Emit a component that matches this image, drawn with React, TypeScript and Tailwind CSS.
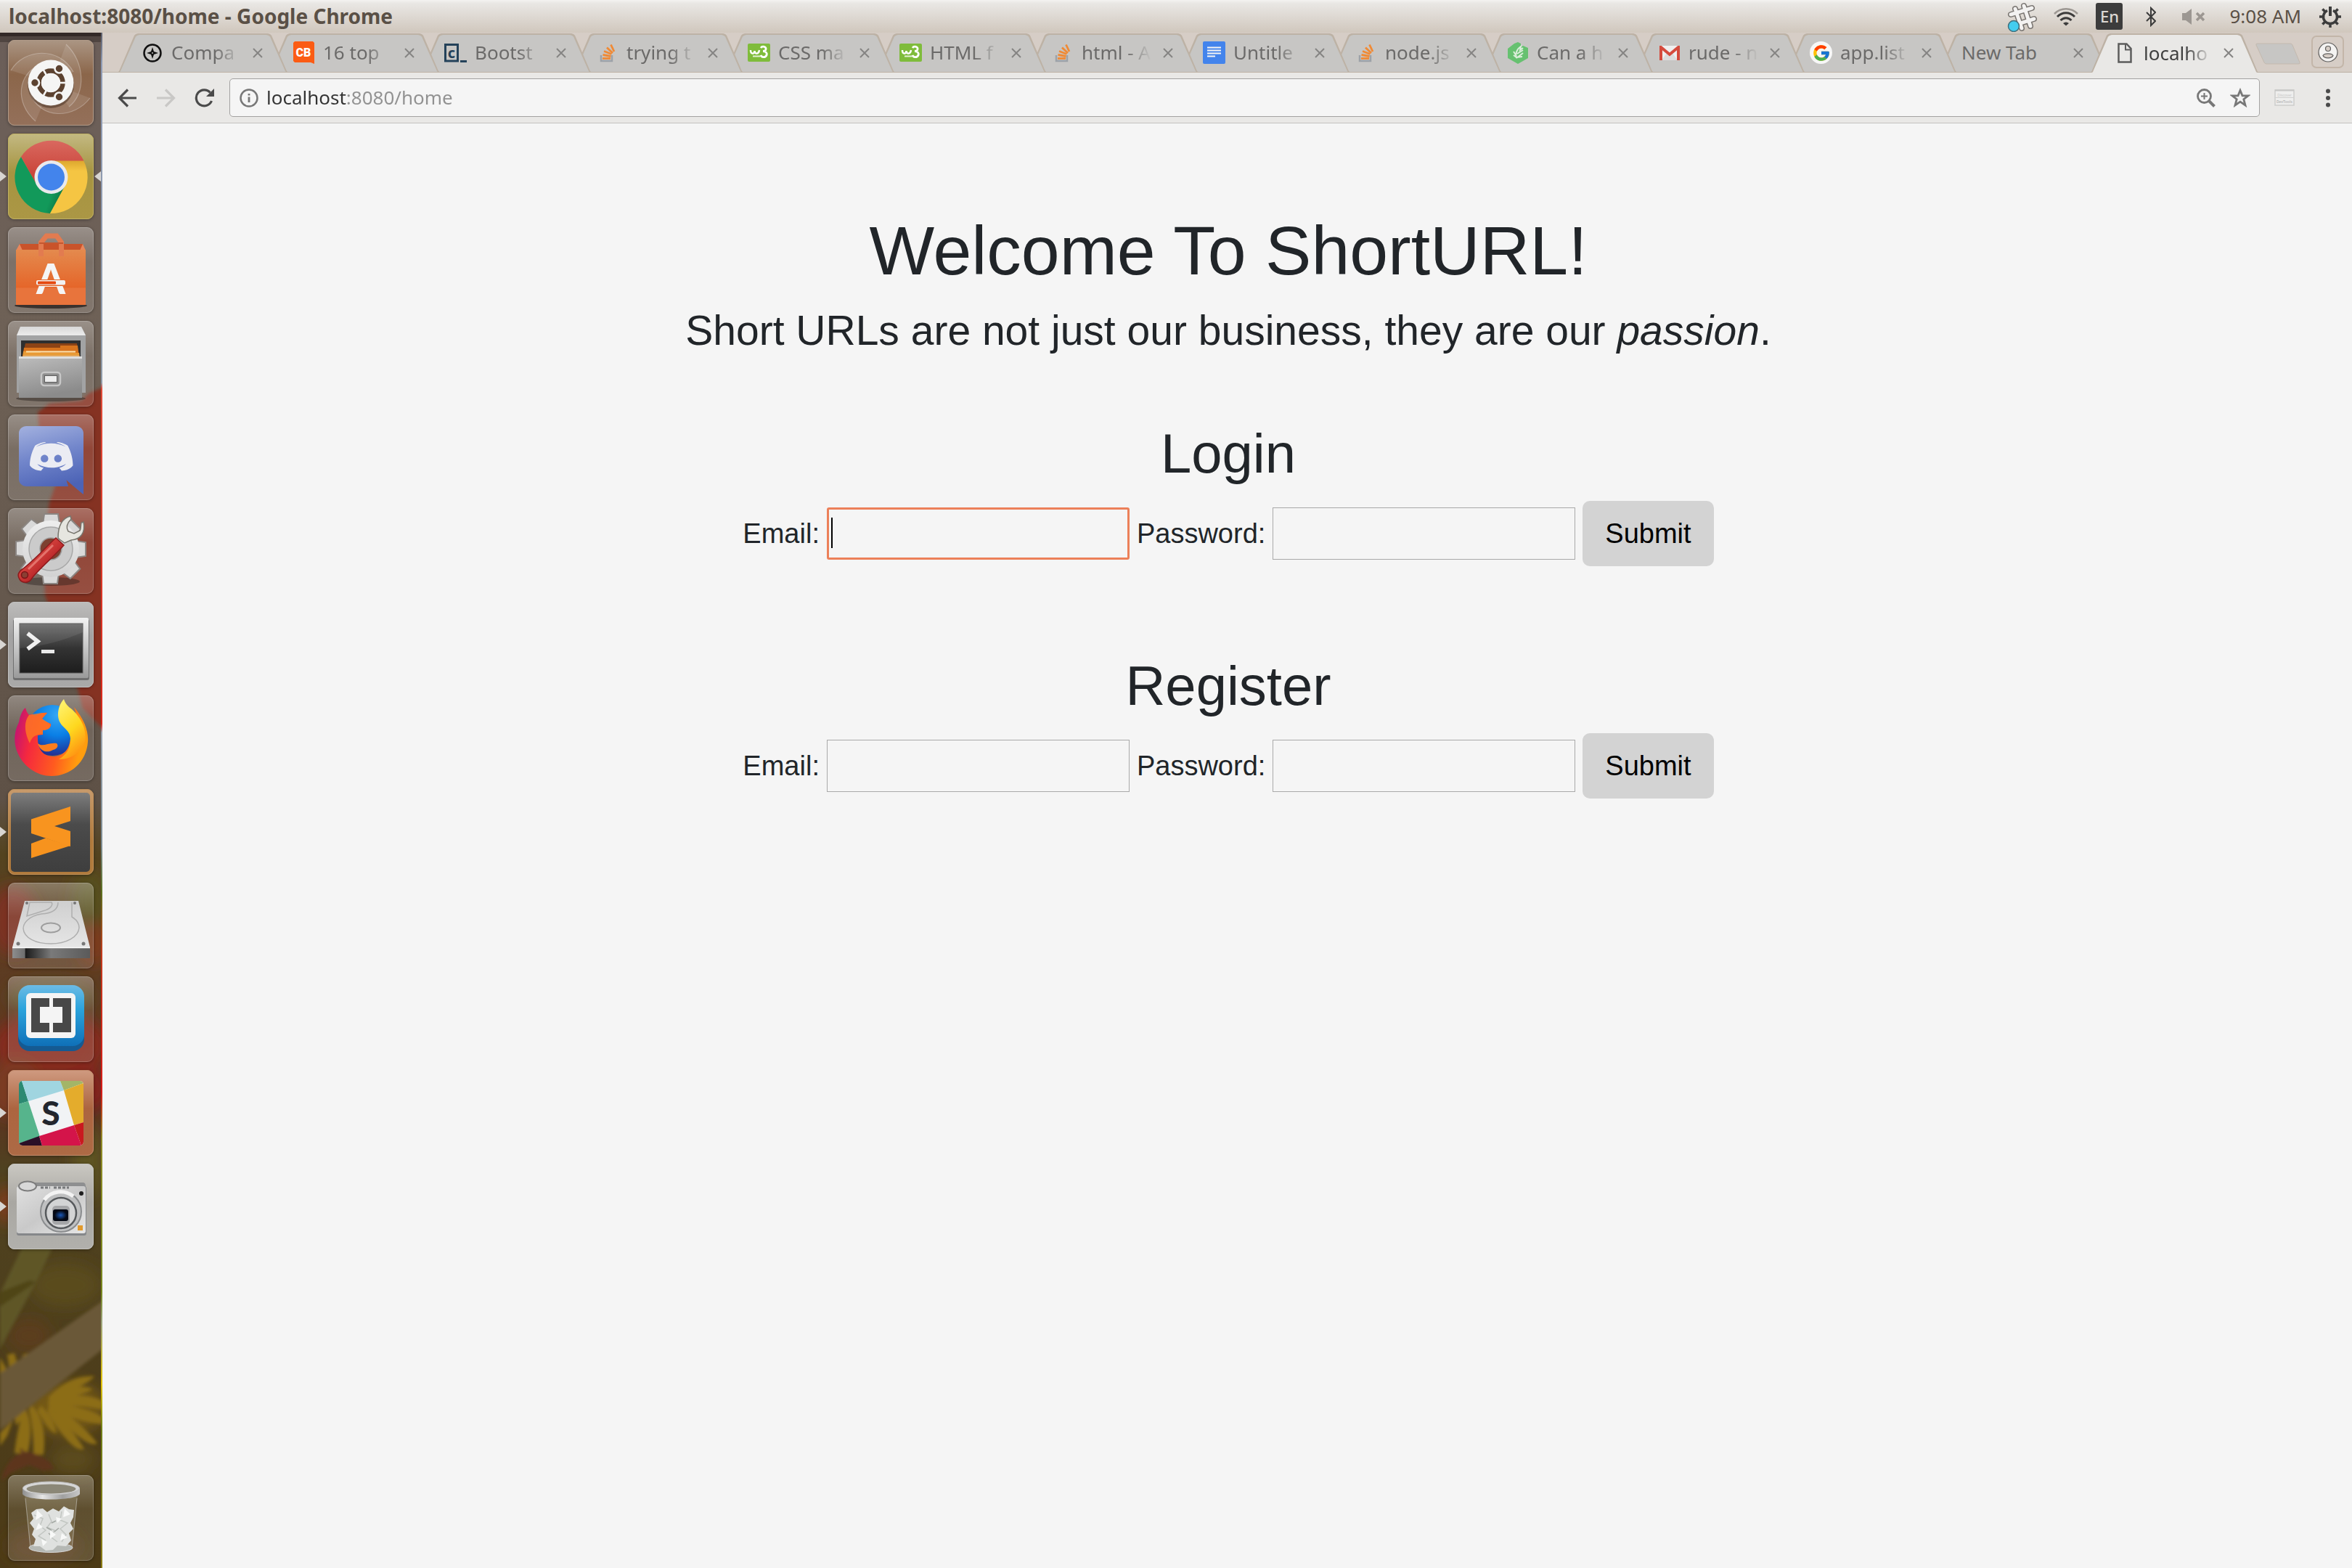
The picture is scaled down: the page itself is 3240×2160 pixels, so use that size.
import React from "react";
import { FcGoogle } from "react-icons/fc";

/* ------------------------------------------------------------------ */
/* Launcher icons, drawn on a 118 x 118 tile                            */
/* ------------------------------------------------------------------ */

function Drawing({ children }: { children: React.ReactNode }) {
  return (
    <svg viewBox="0 0 118 118" className="block size-full" aria-hidden="true">
      {children}
    </svg>
  );
}

function UbuntuIcon() {
  return (
    <Drawing>
      <g fill="none" stroke="#ffffff" strokeOpacity="0.28" strokeWidth="1.2">
        <path d="M4 42C22 12 70 8 90 44" />
        <path d="M80 6C106 30 108 74 84 92" />
        <path d="M113 80C92 108 44 112 30 72" />
        <path d="M38 112C8 86 14 46 44 34" />
      </g>
      <path d="M4 42C22 12 70 8 90 44L60 60Z" fill="#fff" opacity="0.1" />
      <path d="M80 6C106 30 108 74 84 92L60 60Z" fill="#fff" opacity="0.1" />
      <path d="M113 80C92 108 44 112 30 72L60 60Z" fill="#fff" opacity="0.1" />
      <path d="M38 112C8 86 14 46 44 34L60 60Z" fill="#fff" opacity="0.1" />
      <circle cx="59" cy="62" r="32" fill="#3a2416" opacity="0.45" />
      <circle cx="59" cy="59" r="31.5" fill="#f5f5f4" />
      <circle cx="59" cy="59" r="16.5" fill="none" stroke="#5c4230" strokeWidth="6.5" />
      <g stroke="#f5f5f4" strokeWidth="2.6">
        <path d="M59 59H82" />
        <path d="M59 59L47.500 39" />
        <path d="M59 59L47.500 79" />
      </g>
      <g fill="#5c4230" stroke="#f5f5f4" strokeWidth="2.6">
        <circle cx="37" cy="59" r="6" />
        <circle cx="70.500" cy="39.500" r="6" />
        <circle cx="70.500" cy="78.500" r="6" />
      </g>
      <circle cx="59" cy="59" r="13" fill="#f5f5f4" />
    </Drawing>
  );
}

function ChromeIcon() {
  return (
    <Drawing>
      <defs>
        <linearGradient id="chRed" x1="0" y1="0" x2="0" y2="1">
          <stop offset="0" stopColor="#d9685f" />
          <stop offset="1" stopColor="#c53a2e" />
        </linearGradient>
        <linearGradient id="chGreen" x1="0.3" y1="0.5" x2="1" y2="0.8">
          <stop offset="0.6" stopColor="#12995a" />
          <stop offset="1" stopColor="#0b6b3d" />
        </linearGradient>
        <linearGradient id="chYellow" x1="0" y1="0" x2="0" y2="1">
          <stop offset="0" stopColor="#dca62e" />
          <stop offset="0.2" stopColor="#f5c543" />
        </linearGradient>
      </defs>
      <path d="M18 32A50 50 0 0 0 58 110L79 72L40 71Z" fill="url(#chGreen)" />
      <path d="M104 37A50 50 0 0 1 58 110L79 71L59 37Z" fill="url(#chYellow)" />
      <path d="M18 32A50 50 0 0 1 104.500 37.500H59L40 71Z" fill="url(#chRed)" />
      <circle cx="59.500" cy="60" r="23" fill="#e9e9ec" />
      <circle cx="59.500" cy="60" r="18.500" fill="#4384ec" />
    </Drawing>
  );
}

function SoftwareIcon() {
  return (
    <Drawing>
      <defs>
        <linearGradient id="bag" x1="0" y1="0" x2="0" y2="1">
          <stop offset="0" stopColor="#e48a4e" />
          <stop offset="0.68" stopColor="#e5662a" />
          <stop offset="0.7" stopColor="#e8743c" />
          <stop offset="1" stopColor="#e8743c" />
        </linearGradient>
      </defs>
      <ellipse cx="59" cy="108" rx="50" ry="4" fill="#1c1613" opacity="0.7" />
      <path d="M16 23H103V26L107 32H11L16 27Z" fill="#c9532a" />
      <path d="M16 23L20 32H11ZM103 23L99 32H107Z" fill="#e8875c" />
      <rect x="11" y="31" width="96" height="76" fill="url(#bag)" />
      <path
        d="M45.500 40V21L53 12H67L73.500 21V40"
        fill="none"
        stroke="#e27b50"
        strokeWidth="7"
      />
      <path d="M43 22H76" stroke="#c65730" strokeWidth="2" />
      <text
        x="59"
        y="92"
        fontSize="57"
        textAnchor="middle"
        className="font-['Lato',sans-serif] font-black"
        fill="#f5f5f5"
      >
        A
      </text>
      <rect x="38" y="72" width="42" height="9" fill="#e5682c" />
      <rect x="39" y="73" width="40" height="6.500" rx="2" fill="#f1f1f1" />
      <rect x="41" y="74.500" width="25" height="4" rx="1" fill="#e5480f" />
    </Drawing>
  );
}

function FilesIcon() {
  return (
    <Drawing>
      <defs>
        <linearGradient id="drawer" x1="0" y1="0" x2="0.3" y2="1">
          <stop offset="0" stopColor="#bdbdbd" />
          <stop offset="1" stopColor="#8b8b8b" />
        </linearGradient>
        <linearGradient id="cabTop" x1="0" y1="0" x2="0" y2="1">
          <stop offset="0" stopColor="#d8d8d8" />
          <stop offset="1" stopColor="#ececec" />
        </linearGradient>
      </defs>
      <ellipse cx="59" cy="107" rx="48" ry="4" fill="#2b2522" opacity="0.5" />
      <path d="M17 8H101L107 20V99H12V20Z" fill="#a2a3a4" />
      <path d="M17 8H101L107 20H12Z" fill="url(#cabTop)" />
      <rect x="18" y="27" width="82" height="26" fill="#2e2f30" />
      <path d="M24 31H95L99 52H19Z" fill="#8c4316" />
      <path d="M22 37H72V34H96L98 52H20Z" fill="#d8741e" />
      <path d="M21 42H45V44H98L99 52H20Z" fill="#e89a35" />
      <path d="M25 42.500H93" stroke="#fbe3b0" strokeWidth="2" />
      <path d="M21 47H98V52H20Z" fill="#e3a75c" />
      <rect x="15" y="49" width="87" height="57" fill="url(#drawer)" />
      <rect x="15" y="49" width="87" height="3" fill="#dedede" />
      <rect x="46" y="71" width="26" height="18" rx="4" fill="#8e8e8e" stroke="#c7c7c7" strokeWidth="2.500" />
      <rect x="50" y="75" width="18" height="10" fill="#5f5f5f" />
      <rect x="51" y="76" width="16" height="8" fill="#ededed" />
    </Drawing>
  );
}

function DiscordIcon() {
  return (
    <Drawing>
      <defs>
        <linearGradient id="disc" x1="0" y1="0" x2="0.25" y2="1">
          <stop offset="0" stopColor="#a3b1df" />
          <stop offset="0.5" stopColor="#7286cb" />
          <stop offset="1" stopColor="#4c63b6" />
        </linearGradient>
      </defs>
      <svg x="15" y="16" width="89" height="94" viewBox="0 0 448 512" preserveAspectRatio="none">
        <rect x="60" y="100" width="330" height="250" fill="#ebecf3" />
        <path
          fill="url(#disc)"
          d="M297.216 243.2c0 15.616-11.52 28.416-26.112 28.416-14.336 0-26.112-12.8-26.112-28.416s11.52-28.416 26.112-28.416c14.592 0 26.112 12.8 26.112 28.416zm-119.552-28.416c-14.592 0-26.112 12.8-26.112 28.416s11.776 28.416 26.112 28.416c14.592 0 26.112-12.8 26.112-28.416.256-15.616-11.52-28.416-26.112-28.416zM448 52.736V512c-64.494-56.994-43.868-38.128-118.784-107.776l13.568 47.36H52.48C23.552 451.584 0 428.032 0 398.848V52.736C0 23.552 23.552 0 52.48 0h343.04C424.448 0 448 23.552 448 52.736zm-72.96 242.688c0-82.432-36.864-149.248-36.864-149.248-36.864-27.648-71.936-26.88-71.936-26.88l-3.584 4.096c43.52 13.312 63.744 32.512 63.744 32.512-60.811-33.329-132.244-33.335-191.232-7.424-9.472 4.352-15.104 7.424-15.104 7.424s21.248-20.224 67.328-33.536l-2.56-3.072s-35.072-.768-71.936 26.88c0 0-36.864 66.816-36.864 149.248 0 0 21.504 37.12 78.08 38.912 0 0 9.472-11.52 17.152-21.248-32.512-9.728-44.8-30.208-44.8-30.208 3.766 2.636 9.976 6.053 10.496 6.4 43.21 24.198 104.588 32.126 159.744 8.96 8.96-3.328 18.944-8.192 29.44-15.104 0 0-12.8 20.992-46.336 30.464 7.68 9.728 16.896 20.736 16.896 20.736 56.576-1.792 78.336-38.912 78.336-38.912z"
        />
      </svg>
    </Drawing>
  );
}

const GEAR_TEETH = [0, 45, 90, 135, 180, 225, 270, 315];

function SettingsIcon() {
  return (
    <Drawing>
      <defs>
        <linearGradient id="gearFill" x1="0" y1="0" x2="0" y2="1">
          <stop offset="0" stopColor="#eeeeee" />
          <stop offset="1" stopColor="#d2d2d2" />
        </linearGradient>
        <linearGradient id="handle" x1="0" y1="0" x2="1" y2="1">
          <stop offset="0.35" stopColor="#d8453f" />
          <stop offset="0.7" stopColor="#b01f24" />
        </linearGradient>
      </defs>
      <ellipse cx="59" cy="101" rx="40" ry="6" fill="#231a16" opacity="0.4" />
      <g fill="#d9d9d9" stroke="#8b8683" strokeWidth="2">
        {GEAR_TEETH.map((a) => (
          <path key={a} d="M48 22L50 8H69L71 22Z" transform={`rotate(${a} 59 56)`} />
        ))}
      </g>
      <circle cx="59" cy="56" r="39" fill="url(#gearFill)" />
      <circle cx="59" cy="56" r="30" fill="#cbcbcb" stroke="#a8a8a8" strokeWidth="1.500" />
      <circle cx="59" cy="56" r="15" fill="#7c4030" stroke="#9c9c9c" strokeWidth="1.500" />
      <path
        d="M69 41C69 24 74 14 86 11L87 15C81 21 80 27 83 32L91 35L99 31C101 28 100 24 101 20L104 19C107 34 100 43 87 44L78 48L71 43Z"
        fill="#e6e6e0"
        stroke="#77756d"
        strokeWidth="1.500"
      />
      <path
        d="M66 41L77 51C60 70 40 86 32 98C28 104 19 103 16 98C12 92 15 87 20 84C36 72 52 54 66 41Z"
        fill="url(#handle)"
        stroke="#8e1a1c"
        strokeWidth="1.500"
      />
      <path d="M62 51L28 84" stroke="#e4736c" strokeWidth="3" />
      <circle cx="23" cy="92" r="4.500" fill="#8a3f33" stroke="#7b1416" strokeWidth="1.500" />
    </Drawing>
  );
}

function TerminalIcon() {
  return (
    <Drawing>
      <defs>
        <linearGradient id="termFrame" x1="0" y1="0" x2="0" y2="1">
          <stop offset="0" stopColor="#f2f2f2" />
          <stop offset="1" stopColor="#9a9a9a" />
        </linearGradient>
        <linearGradient id="termScreen" x1="0" y1="0" x2="0" y2="1">
          <stop offset="0" stopColor="#6a6a6a" />
          <stop offset="0.5" stopColor="#333333" />
          <stop offset="1" stopColor="#1d1d1d" />
        </linearGradient>
      </defs>
      <rect x="7" y="24" width="105" height="84" rx="3" fill="#6f6f6f" />
      <rect x="8" y="22" width="103" height="83" rx="2" fill="url(#termFrame)" />
      <rect x="16" y="30" width="87" height="68" fill="url(#termScreen)" stroke="#565656" />
      <path d="M16 64C45 62 75 54 103 42V30H16Z" fill="#fff" opacity="0.08" />
      <path d="M27 43.500L41 54.500L27 65" fill="none" stroke="#f0f0f0" strokeWidth="5.500" />
      <rect x="46" y="66" width="18" height="5" fill="#e9e9e9" />
    </Drawing>
  );
}

function FirefoxIcon() {
  return (
    <Drawing>
      <defs>
        <linearGradient id="ffBody" x1="0" y1="0.4" x2="1" y2="0.6">
          <stop offset="0" stopColor="#c6156f" />
          <stop offset="0.22" stopColor="#f5293e" />
          <stop offset="0.6" stopColor="#ff5b1f" />
          <stop offset="0.9" stopColor="#ff9d0e" />
        </linearGradient>
        <linearGradient id="ffTail" x1="0.3" y1="0" x2="0.7" y2="1">
          <stop offset="0" stopColor="#fff16a" />
          <stop offset="0.5" stopColor="#fed81f" />
          <stop offset="1" stopColor="#ff8a10" />
        </linearGradient>
        <radialGradient id="ffGlobe" cx="0.6" cy="0.2" r="0.9">
          <stop offset="0" stopColor="#35a8f5" />
          <stop offset="0.45" stopColor="#0a7fe6" />
          <stop offset="0.8" stopColor="#1b3fa5" />
          <stop offset="1" stopColor="#3a1b73" />
        </radialGradient>
      </defs>
      <circle cx="61" cy="48" r="35" fill="url(#ffGlobe)" />
      <path
        d="M24 17C18 22 16 32 15 37C8 50 8 65 12 76C20 98 40 111 60 111C86 111 108 92 110 64C111 50 106 34 91 16C98 34 94 44 86 53C87 72 78 84 62 84C48 84 40 74 41 55L48 54L48 48C56 47 60 44 59 39L49 35L47 32L54 24C44 23 40 28 37 28C34 26 31 26 29 27C26 24 25 20 24 17Z"
        fill="url(#ffBody)"
      />
      <path d="M41 66C48 72 56 64 67 66C70 69 68 74 62 75C54 80 44 77 41 66Z" fill="#fb7d1e" />
      <path d="M29 27C36 26 40 24 54 24L47 32L59 40C58 46 54 48 48 48L48 54C38 53 32 58 30 66C22 50 22 36 29 27Z" fill="#ff7a22" opacity="0.8" />
      <path
        d="M77 5C69 14 67 27 71 36C76 46 86 48 86 60C86 74 80 82 70 88C92 88 102 74 106 64C110 44 96 24 84 16C80 12 78 9 77 5Z"
        fill="url(#ffTail)"
      />
    </Drawing>
  );
}

function SublimeIcon() {
  return (
    <Drawing>
      <defs>
        <linearGradient id="sublBg" x1="0" y1="0" x2="0" y2="1">
          <stop offset="0" stopColor="#7d7d7d" />
          <stop offset="0.4" stopColor="#4b4b4b" />
          <stop offset="1" stopColor="#3e3e3e" />
        </linearGradient>
      </defs>
      <rect x="4" y="5" width="109" height="109" rx="5" fill="url(#sublBg)" />
      <path d="M32 75L52 67.500L86 78L32 95Z" fill="#f7931e" />
      <path d="M52 67.500L66 63L86 78Z" fill="#d87a15" />
      <path d="M32 41.500L86 24V44L64 51L86 58V79L32 61Z" fill="#f8941f" />
    </Drawing>
  );
}

function DiskIcon() {
  return (
    <Drawing>
      <defs>
        <linearGradient id="diskTop" x1="0" y1="0" x2="0" y2="1">
          <stop offset="0" stopColor="#cfcfcf" />
          <stop offset="1" stopColor="#e6e6e6" />
        </linearGradient>
        <linearGradient id="diskFront" x1="0" y1="0" x2="1" y2="0">
          <stop offset="0" stopColor="#8d8d8d" />
          <stop offset="0.16" stopColor="#6e6e6e" />
          <stop offset="0.17" stopColor="#1a1a1a" />
          <stop offset="0.5" stopColor="#7a7a7a" />
          <stop offset="1" stopColor="#5a5a5a" />
        </linearGradient>
      </defs>
      <path d="M23 25H97L113 89H6Z" fill="url(#diskTop)" />
      <rect x="6" y="89" width="107" height="15" fill="url(#diskFront)" />
      <path d="M6 89.500H113" stroke="#fafafa" strokeWidth="1.500" />
      <g fill="none" stroke="#aeaeae" strokeWidth="1.500">
        <path d="M30 27H60C62 30 60 36 48 39L26 46Z" />
        <path d="M69 27C69 36 62 42 46 43C28 46 21 56 21 63C22 76 38 84 59 84C80 84 97 75 98 62C98 55 93 50 88 47V27" />
        <ellipse cx="59" cy="62" rx="13" ry="6.500" stroke="#9d9d9d" strokeWidth="2" />
      </g>
      <g fill="#777">
        <circle cx="26" cy="28" r="2" />
        <circle cx="92" cy="28" r="2" />
        <circle cx="14" cy="84" r="2.500" />
        <circle cx="104" cy="84" r="2.500" />
      </g>
    </Drawing>
  );
}

function BracketsIcon() {
  return (
    <Drawing>
      <defs>
        <linearGradient id="brk" x1="0" y1="0" x2="0" y2="1">
          <stop offset="0" stopColor="#6cbbe4" />
          <stop offset="0.4" stopColor="#2ba3dc" />
          <stop offset="1" stopColor="#0f70b8" />
        </linearGradient>
      </defs>
      <rect x="14" y="20" width="91" height="83" rx="16" fill="#155a92" />
      <rect x="14" y="12" width="91" height="84" rx="16" fill="url(#brk)" />
      <rect x="25" y="23" width="68" height="62" rx="6" fill="#f4f4f4" />
      <path d="M32 30H57V42H44V64H57V77H32Z" fill="#484848" />
      <path d="M87 30H62V42H75V64H62V77H87Z" fill="#484848" />
    </Drawing>
  );
}

function SlackIcon() {
  return (
    <Drawing>
      <defs>
        <clipPath id="slackClip">
          <rect x="15" y="15" width="89" height="89" rx="5" />
        </clipPath>
      </defs>
      <g clipPath="url(#slackClip)">
        <rect x="15" y="15" width="89" height="89" fill="#f1f3f5" />
        <path d="M15 15H19L28 43L15 47Z" fill="#2b8a72" />
        <path d="M19 15H72L77 28L28 43Z" fill="#a0d5e0" />
        <path d="M72 15H104V18L77 28Z" fill="#a3b568" />
        <path d="M77 28L104 18V72L91 76Z" fill="#e4ac2c" />
        <path d="M15 47L28 43L44 92L15 101Z" fill="#56b48c" />
        <path d="M15 101L43 91L47 104H15Z" fill="#2a0f27" />
        <path d="M43 91L91 76L101 104H47Z" fill="#d4144a" />
        <path d="M91 76L104 72V104H101Z" fill="#c9191f" />
      </g>
      <text
        x="59"
        y="76"
        fontSize="46"
        textAnchor="middle"
        className="font-['Lato',sans-serif] font-black"
        fill="#22262e"
      >
        S
      </text>
    </Drawing>
  );
}

function CameraIcon() {
  return (
    <Drawing>
      <defs>
        <linearGradient id="camBody" x1="0" y1="0" x2="1" y2="1">
          <stop offset="0" stopColor="#e0e0e0" />
          <stop offset="0.5" stopColor="#c9c9c9" />
          <stop offset="1" stopColor="#e6e6e6" />
        </linearGradient>
        <radialGradient id="lens">
          <stop offset="0" stopColor="#1a58b8" />
          <stop offset="0.8" stopColor="#050914" />
        </radialGradient>
      </defs>
      <path d="M30 26H104C107 27 107 30 107 33H14Z" fill="#8e8f90" />
      <rect x="12" y="31" width="96" height="68" rx="3" fill="#85878a" />
      <rect x="12" y="31" width="95" height="65" rx="3" fill="url(#camBody)" />
      <ellipse cx="27" cy="31" rx="12" ry="6.500" fill="#d8d8d8" stroke="#7c7c7c" strokeWidth="2" />
      <path d="M45 33H58M63 33H84" stroke="#77797b" strokeWidth="3" strokeDasharray="4 2" />
      <circle cx="73" cy="66" r="28" fill="#bfc0c1" stroke="#8a8c8e" strokeWidth="2" />
      <path d="M50 50A28 28 0 0 1 90 45" stroke="#f3f3f3" strokeWidth="5" fill="none" />
      <circle cx="73" cy="68" r="21" fill="#d3d4d5" stroke="#56595c" strokeWidth="2.500" />
      <rect x="61" y="58" width="24" height="26" rx="5" fill="#a5a6a8" />
      <rect x="62" y="63" width="21" height="16" rx="3" fill="url(#lens)" />
      <circle cx="101" cy="41" r="3" fill="#1e1e1e" />
      <rect x="96" y="85" width="7" height="7" fill="#e29a2d" />
    </Drawing>
  );
}

function TrashIcon() {
  return (
    <Drawing>
      <defs>
        <linearGradient id="rim" x1="0" y1="0" x2="1" y2="0">
          <stop offset="0" stopColor="#8e8e8e" />
          <stop offset="0.35" stopColor="#e6e6e6" />
          <stop offset="0.7" stopColor="#a0a0a0" />
          <stop offset="1" stopColor="#c8c8c8" />
        </linearGradient>
      </defs>
      <path d="M23 28H96L89 100C80 108 38 108 30 100Z" fill="#d9d4b8" opacity="0.18" />
      <path d="M24 32L31 100M95 32L88 100" stroke="#cfcfcf" strokeOpacity="0.5" strokeWidth="1" />
      <ellipse cx="59" cy="100" rx="30" ry="6.500" fill="#b5b8b4" stroke="#d9d9d9" />
      <path
        d="M32 52L39 47L48 46L54 51L62 46L70 50L77 43L84 47L91 48L90 58L86 66L90 74L84 80L87 90L80 98L68 97L62 103L52 104L44 98L35 98L38 88L33 82L36 74L30 66L35 60Z"
        fill="#dfe1df"
      />
      <g fill="none" stroke="#c2c6c2" strokeWidth="1.500">
        <path d="M36 55L48 60L44 70L52 76L42 84L52 90" />
        <path d="M56 54L60 64L54 72L64 76L60 86L68 92" />
        <path d="M74 50L72 62L82 66L72 74L80 82L74 92" />
      </g>
      <g stroke="#a3a8a3" strokeWidth="1.500">
        <path d="M53 72L60 76M64 78L70 73M60 66L66 63M56 80L60 84" />
      </g>
      <path d="M40 48L48 56L38 62Z M78 46L86 54L76 58Z M58 76L66 82L58 88Z M42 66L48 72L38 76Z M66 58L74 60L68 66Z M74 80L82 86L72 90Z M46 88L54 92L48 98Z" fill="#f8f9f8" />
      <path d="M20 18V26C24 36 94 36 99 26V18Z" fill="url(#rim)" />
      <ellipse cx="59.500" cy="18" rx="39" ry="9" fill="#d6d6d6" stroke="#bdbdbd" />
      <ellipse cx="59.500" cy="19" rx="34" ry="6.500" fill="#8b8777" />
    </Drawing>
  );
}

/* ------------------------------------------------------------------ */
/* Launcher                                                             */
/* ------------------------------------------------------------------ */

type LauncherItem = {
  name: string;
  icon: React.ReactNode;
  tile: string;
  running?: boolean;
  focused?: boolean;
};

const GLASS =
  "bg-[linear-gradient(to_bottom,rgba(255,255,255,0.3),rgba(255,255,255,0.1)_40%,rgba(255,255,255,0.14))] border-white/20";

const LAUNCHER: LauncherItem[] = [
  { name: "Search your computer", icon: <UbuntuIcon />, tile: "bg-[linear-gradient(to_bottom,#ab9684,#8b664a_40%,#94705a)] border-[#b09a88]" },
  { name: "Google Chrome", icon: <ChromeIcon />, tile: "bg-[linear-gradient(to_bottom,#c3b983,#a69440_45%,#ab9745)] border-[#c0b163]", running: true, focused: true },
  { name: "Ubuntu Software", icon: <SoftwareIcon />, tile: GLASS },
  { name: "Files", icon: <FilesIcon />, tile: GLASS },
  { name: "Discord", icon: <DiscordIcon />, tile: GLASS },
  { name: "System Settings", icon: <SettingsIcon />, tile: GLASS },
  { name: "Terminal", icon: <TerminalIcon />, tile: "bg-[linear-gradient(to_bottom,#bdbcbb,#a3a2a2_40%,#a9a9a8)] border-[#c0bfbf]", running: true },
  { name: "Firefox", icon: <FirefoxIcon />, tile: GLASS },
  { name: "Sublime Text", icon: <SublimeIcon />, tile: "bg-[linear-gradient(to_bottom,#c79a6c,#b07a3c_60%,#b07a3c)] border-[#c2915a]", running: true },
  { name: "Disk", icon: <DiskIcon />, tile: GLASS },
  { name: "Brackets", icon: <BracketsIcon />, tile: GLASS },
  { name: "Slack", icon: <SlackIcon />, tile: "bg-[linear-gradient(to_bottom,#cf9a80,#ac6540_45%,#ad6a45)] border-[#c38b6c]", running: true },
  { name: "Screenshot", icon: <CameraIcon />, tile: "bg-[linear-gradient(to_bottom,#cac8c2,#a9a7a2_45%,#b1b0ac)] border-[#c4c3bf]", running: true },
];

function Tile({ item }: { item: LauncherItem }) {
  return (
    <div className="relative shrink-0 px-[11px]">
      {item.running && (
        <span className="absolute left-0 top-[52px] h-[14px] w-[9px] bg-[#d8d5d2] [clip-path:polygon(0_0,100%_50%,0_100%)]" />
      )}
      {item.focused && (
        <span className="absolute right-0 top-[52px] h-[14px] w-[9px] bg-[#d8d5d2] [clip-path:polygon(100%_0,0_50%,100%_100%)]" />
      )}
      <button
        aria-label={item.name}
        className={`relative block size-[118px] rounded-[9px] shadow-[0_1px_4px_rgba(0,0,0,0.35)] ${item.tile}`}
      >
        <span className="absolute inset-0 rounded-[9px] border border-inherit" />
        {item.icon}
      </button>
    </div>
  );
}

const PETALS = [
  "M66 1926C84 1906 106 1894 130 1896C122 1906 96 1916 72 1934Z",
  "M68 1928C90 1908 118 1908 128 1914C112 1922 90 1926 72 1936Z",
  "M66 1930C96 1918 128 1922 141 1930V1942C118 1936 92 1934 70 1940Z",
  "M66 1932C98 1934 130 1944 141 1952V1962C116 1960 86 1948 68 1942Z",
  "M70 1936C92 1944 118 1968 134 1988C124 1996 98 1972 74 1944Z",
  "M66 1938C84 1950 104 1976 116 1996C104 2002 84 1976 66 1946Z",
  "M56 1936C66 1944 76 1962 78 1974C70 1976 60 1956 52 1944Z",
  "M44 1936C58 1950 64 1976 60 2004H46C46 1980 44 1956 40 1942Z",
  "M34 1940C44 1954 44 1980 38 2002H20C22 1980 28 1954 32 1944Z",
  "M20 1952L32 1944L34 1950L22 1964Z",
  "M0 1870L8 1884L10 1894L0 1898Z",
  "M10 1866L20 1864L26 1886L14 1892Z",
  "M32 1866L38 1864L36 1876L28 1882Z",
  "M0 1974L18 1956L10 1978L0 1992Z",
];

function Wallpaper() {
  return (
    <svg
      className="absolute inset-0 size-full"
      viewBox="0 45 141 2115"
      preserveAspectRatio="none"
      aria-hidden="true"
    >
      <defs>
        <linearGradient id="wall" x1="0" y1="0" x2="0" y2="1">
          <stop offset="0" stopColor="#6b5e59" />
          <stop offset="0.2" stopColor="#6e6156" />
          <stop offset="0.5" stopColor="#5e5146" />
          <stop offset="0.535" stopColor="#54431f" />
          <stop offset="0.6" stopColor="#5d3d22" />
          <stop offset="0.7" stopColor="#5c3220" />
          <stop offset="0.74" stopColor="#4f4220" />
          <stop offset="1" stopColor="#4c3a16" />
        </linearGradient>
        <linearGradient id="edge" x1="0" y1="0" x2="0" y2="1">
          <stop offset="0" stopColor="#5d606c" />
          <stop offset="0.02" stopColor="#8d9ab4" />
          <stop offset="0.228" stopColor="#8f9aa8" />
          <stop offset="0.232" stopColor="#e04b38" />
          <stop offset="0.45" stopColor="#d8281a" />
          <stop offset="0.456" stopColor="#96a0ac" />
          <stop offset="0.53" stopColor="#7b8a90" />
          <stop offset="0.56" stopColor="#5d7020" />
          <stop offset="0.6" stopColor="#c23a1c" />
          <stop offset="0.69" stopColor="#d61c18" />
          <stop offset="0.72" stopColor="#8f8a25" />
          <stop offset="0.82" stopColor="#77861e" />
          <stop offset="0.84" stopColor="#9aa27a" />
          <stop offset="0.88" stopColor="#e2c200" />
          <stop offset="0.91" stopColor="#6f7d18" />
          <stop offset="1" stopColor="#8a7a14" />
        </linearGradient>
        <filter id="soft" x="-30%" y="-30%" width="160%" height="160%">
          <feGaussianBlur stdDeviation="2" />
        </filter>
        <filter id="softer" x="-50%" y="-50%" width="200%" height="200%">
          <feGaussianBlur stdDeviation="10" />
        </filter>
      </defs>
      <rect y="45" width="141" height="2115" fill="url(#wall)" />
      <path
        filter="url(#soft)"
        fill="#853220"
        d="M150 530L122 542L112 552L68 556L52 568L54 590L76 600L78 664L68 692L60 760L62 820L84 880L106 945L114 976L150 1012Z"
      />
      <g filter="url(#softer)">
        <ellipse cx="18" cy="1268" rx="34" ry="48" fill="#7b3122" />
        <ellipse cx="124" cy="1240" rx="26" ry="40" fill="#57501f" />
        <ellipse cx="130" cy="1300" rx="24" ry="30" fill="#7a3a1e" />
        <ellipse cx="70" cy="1374" rx="60" ry="26" fill="#5a4c24" />
        <ellipse cx="70" cy="1440" rx="80" ry="46" fill="#872a1e" />
        <ellipse cx="20" cy="1500" rx="40" ry="40" fill="#7a3a20" />
        <ellipse cx="120" cy="1500" rx="30" ry="30" fill="#84241c" />
        <ellipse cx="10" cy="1660" rx="20" ry="26" fill="#7a3c1c" />
        <ellipse cx="120" cy="1600" rx="20" ry="50" fill="#5e5524" />
        <ellipse cx="90" cy="1770" rx="50" ry="30" fill="#5a4c1e" />
        <ellipse cx="40" cy="1840" rx="30" ry="24" fill="#5c3c1a" />
        <ellipse cx="90" cy="1940" rx="56" ry="36" fill="#735814" />
        <ellipse cx="100" cy="2010" rx="30" ry="20" fill="#5c4c1c" />
        <ellipse cx="60" cy="2130" rx="50" ry="24" fill="#5a3d1e" />
      </g>
      <g filter="url(#soft)">
        <path d="M0 1782L32 1715H74L50 1766L0 1858Z" fill="#5f5627" />
        <path d="M0 1780L40 1764L50 1766L0 1800Z" fill="#4f4518" />
        <g fill="#8c6d18">
          {PETALS.map((d) => (
            <path key={d} d={d} />
          ))}
        </g>
        <path d="M0 1892L150 1786V1852L0 1970Z" fill="#6a5938" />
        <path d="M2 2040C6 2016 24 1998 40 2000C60 2006 72 2014 74 2024L60 2026L40 2018L16 2028Z" fill="#5d351c" />
        <path d="M28 1996L34 2002" stroke="#5d351c" strokeWidth="3" />
      </g>
      <path d="M0 45H139V58H0Z" fill="#1f1815" opacity="0.35" />
      <path d="M0 45H139V50H0Z" fill="#1f1815" opacity="0.6" />
      <rect x="139" y="45" width="2" height="2115" fill="url(#edge)" />
    </svg>
  );
}

function Launcher() {
  return (
    <nav aria-label="Launcher" className="relative flex shrink-0 flex-col justify-between">
      <Wallpaper />
      <div className="relative mr-[2px] flex w-[139px] flex-col gap-[11px] pt-[10px]">
        {LAUNCHER.map((item) => (
          <Tile key={item.name} item={item} />
        ))}
      </div>
      <div className="relative mr-[2px] w-[139px] pb-[10px]">
        <Tile item={{ name: "Trash", icon: <TrashIcon />, tile: GLASS }} />
      </div>
    </nav>
  );
}

/* ------------------------------------------------------------------ */
/* Top panel                                                            */
/* ------------------------------------------------------------------ */

const POWER_TEETH = [45, 90, 135, 180, 225, 270, 315];

function TopPanel() {
  return (
    <header className="flex h-[45px] shrink-0 items-center justify-between bg-[linear-gradient(to_bottom,#f4f3f1,#e9e7e4_10%,#d0c7bd)] pl-3 pr-[14px] font-['Noto_Sans','Open_Sans',sans-serif] text-[#5a5046]">
      <h1 className="whitespace-nowrap text-[28px] font-bold leading-[45px]">
        localhost:8080/home - Google Chrome
      </h1>
      <div className="flex items-center">
        <svg viewBox="0 0 42 42" className="mr-[21px] size-[42px]" aria-label="Slack">
          <g strokeLinecap="round" fill="none">
            <g stroke="#77736f" strokeWidth="8">
              <path d="M11 10L20 37M23 6L32 34M5 18L34 9M9 33L37 24" />
            </g>
            <g stroke="#f3f2f1" strokeWidth="5">
              <path d="M11 10L20 37M23 6L32 34M5 18L34 9M9 33L37 24" />
            </g>
          </g>
          <circle cx="9" cy="34" r="7.500" fill="#43cdf0" stroke="#3f6f7c" strokeWidth="1.500" />
        </svg>
        <svg viewBox="0 0 36 26" className="mr-[23px] h-[26px] w-[36px]" fill="none" aria-label="Network">
          <path d="M2 9C11 0 25 0 34 9" stroke="#9c9792" strokeWidth="2.500" />
          <path d="M6 13C13 6 23 6 30 13" stroke="#3c3c3c" strokeWidth="3" />
          <path d="M10.500 18C15 13.500 21 13.500 25.500 18" stroke="#3c3c3c" strokeWidth="3" />
          <path d="M14 22C16.500 20 19.500 20 22 22L18 25.500Z" fill="#3c3c3c" />
        </svg>
        <button className="mr-[32px] h-[37px] w-[37px] rounded-[3px] bg-[#3c3c3c] text-center text-[22px] font-medium leading-[37px] text-[#dcd8d3]">
          En
        </button>
        <svg viewBox="0 0 14 28" className="mr-[36px] h-[28px] w-[14px]" aria-label="Bluetooth">
          <path d="M1 8L13 20L7 26V2L13 8L1 20" fill="none" stroke="#3c3c3c" strokeWidth="2" />
        </svg>
        <svg viewBox="0 0 32 22" className="mr-[33px] h-[22px] w-[32px]" aria-label="Sound muted">
          <path d="M0 6H5L13 0V22L5 16H0Z" fill="#9c9792" />
          <path d="M20 6L30 16M30 6L20 16" stroke="#9c9792" strokeWidth="3.500" />
        </svg>
        <time className="mr-[24px] whitespace-nowrap text-[26px] leading-[45px]">9:08 AM</time>
        <svg viewBox="0 0 32 32" className="size-[32px]" aria-label="Session">
          <path d="M12 7.500A9.500 9.500 0 1 0 20 7.500" fill="none" stroke="#3c3c3c" strokeWidth="3.500" />
          <path d="M16 2V15" stroke="#3c3c3c" strokeWidth="4" />
          <g stroke="#3c3c3c" strokeWidth="3.500">
            {POWER_TEETH.map((a) => (
              <path key={a} d="M16 1V6" transform={`rotate(${a} 16 16)`} />
            ))}
          </g>
        </svg>
      </div>
    </header>
  );
}

/* ------------------------------------------------------------------ */
/* Browser chrome                                                       */
/* ------------------------------------------------------------------ */

function CompassFavicon() {
  return (
    <svg viewBox="0 0 26 26" className="size-[26px]" aria-hidden="true">
      <circle cx="13" cy="13" r="11.500" fill="none" stroke="#111" strokeWidth="2.500" />
      <path d="M13 5L15 11L21 13L15 15L13 21L11 15L5 13L11 11Z" fill="#111" />
      <circle cx="13" cy="13" r="1" fill="#c7c6c4" />
    </svg>
  );
}

function CbFavicon() {
  return (
    <svg viewBox="0 0 29 31" className="h-[31px] w-[29px]" aria-hidden="true">
      <path d="M2 0H27L29 2V31L24 29H2L0 27V2Z" fill="#fb5c14" />
      <text
        x="14"
        y="21"
        fontSize="16"
        textAnchor="middle"
        className="font-['Roboto',sans-serif] font-black"
        fill="#fff"
      >
        CB
      </text>
    </svg>
  );
}

function CodeFavicon() {
  return (
    <svg viewBox="0 0 31 26" className="h-[26px] w-[31px]" aria-hidden="true">
      <rect x="1.500" y="1.500" width="17" height="22.500" fill="none" stroke="#24425a" strokeWidth="3" />
      <text
        x="10"
        y="20"
        fontSize="20"
        textAnchor="middle"
        className="font-['Noto_Sans',sans-serif] font-bold"
        fill="#24425a"
      >
        c
      </text>
      <rect x="22" y="23" width="9" height="3" fill="#24425a" />
    </svg>
  );
}

function StackFavicon() {
  return (
    <svg viewBox="0 0 24 26" className="h-[26px] w-[24px]" fill="none" aria-hidden="true">
      <path d="M3 16V24H18V16" stroke="#9da2a8" strokeWidth="2.500" />
      <g stroke="#f08a35" strokeWidth="2.800">
        <path d="M5 20.500H16" />
        <path d="M5.500 15.500L16.500 17.500" />
        <path d="M7 10.500L17.500 14.500" />
        <path d="M11 5.500L19 13" />
        <path d="M16.500 1.500L21 11" />
      </g>
    </svg>
  );
}

function W3Favicon() {
  return (
    <svg viewBox="0 0 31 25" className="h-[25px] w-[31px]" aria-hidden="true">
      <rect width="31" height="25" rx="2" fill="#7fbc3b" />
      <path d="M4 9C4 15 9 15 9.500 10C10 15 15 15 16 9" fill="none" stroke="#fff" strokeWidth="2.500" />
      <path
        d="M18 6C20 3 26 4 25 8C25 10 22 10.500 21 10.500C25 10.500 27 13 26 16C24 20 19 19 18 16"
        fill="none"
        stroke="#fff"
        strokeWidth="2.800"
      />
      <path d="M7 17.500H17" stroke="#e4f1d6" strokeWidth="2" />
    </svg>
  );
}

function DocFavicon() {
  return (
    <svg viewBox="0 0 31 31" className="size-[31px]" aria-hidden="true">
      <rect width="31" height="31" rx="2" fill="#4384ec" />
      <path d="M6 8.500H25M6 12.500H25M6 16.500H25M6 20.500H17" stroke="#f4f4f4" strokeWidth="2" />
    </svg>
  );
}

function LeafFavicon() {
  return (
    <svg viewBox="0 0 28 30" className="h-[30px] w-[28px]" aria-hidden="true">
      <path
        d="M14 0L18 2V7L21 5L28 8V22L14 30L0 22V9L9 2Z"
        fill="#66c170"
      />
      <path
        d="M12 22C10 17 12 10 18 6L17 11L21 8M12 22L21 15M12 19L8 13M13 16L21 11M12 21L20 20M12 21L8 18"
        fill="none"
        stroke="#dbeedb"
        strokeWidth="2"
      />
    </svg>
  );
}

function MailFavicon() {
  return (
    <svg viewBox="0 0 28 20" className="h-[20px] w-[28px]" aria-hidden="true">
      <rect width="28" height="20" rx="1" fill="#efefef" />
      <path d="M3 20L11 9L14 12L17 9L25 20Z" fill="#dcdcdc" />
      <path d="M2 20V2L14 12L26 2V20" fill="none" stroke="#d54b3d" strokeWidth="4" />
    </svg>
  );
}

function GoogleFavicon() {
  return (
    <span className="flex size-[31px] items-center justify-center rounded-full bg-[#f7f7f7]">
      <FcGoogle className="size-[26px]" />
    </span>
  );
}

function PageFavicon() {
  return (
    <svg viewBox="0 0 20 28" className="h-[28px] w-[20px]" fill="none" aria-hidden="true">
      <path d="M1.500 1.500H12.500L18.500 8V26.500H1.500Z" stroke="#5c5c5c" strokeWidth="2.500" />
      <path d="M11 1.500V9.500H18.500" stroke="#5c5c5c" strokeWidth="2" />
    </svg>
  );
}

type Tab = { title: string; icon?: React.ReactNode; active?: boolean };

const TABS: Tab[] = [
  { title: "Compa", icon: <CompassFavicon /> },
  { title: "16 top", icon: <CbFavicon /> },
  { title: "Bootst", icon: <CodeFavicon /> },
  { title: "trying t", icon: <StackFavicon /> },
  { title: "CSS ma", icon: <W3Favicon /> },
  { title: "HTML f", icon: <W3Favicon /> },
  { title: "html - A", icon: <StackFavicon /> },
  { title: "Untitle", icon: <DocFavicon /> },
  { title: "node.js", icon: <StackFavicon /> },
  { title: "Can a h", icon: <LeafFavicon /> },
  { title: "rude - n", icon: <MailFavicon /> },
  { title: "app.list", icon: <GoogleFavicon /> },
  { title: "New Tab" },
  { title: "localho", icon: <PageFavicon />, active: true },
];

const TAB_SHAPE =
  "[clip-path:polygon(0_100%,1px_98%,22px_5%,24px_1px,27px_0,calc(100%_-_27px)_0,calc(100%_-_24px)_1px,calc(100%_-_22px)_5%,calc(100%_-_1px)_98%,100%_100%)]";

function TabItem({ tab, order }: { tab: Tab; order: number }) {
  return (
    <div
      className={`relative -ml-[24px] flex min-w-0 shrink items-center pl-[31px] pr-[34px] first:ml-0 ${tab.active ? "h-[54px] w-[231px]" : "h-[53px] w-[233px]"}`}
      style={{ zIndex: order }}
    >
      <span className={`absolute inset-0 bg-[#bdb2a5] ${TAB_SHAPE}`} />
      <span
        className={`absolute inset-x-[2px] bottom-0 top-[2px] ${TAB_SHAPE} ${tab.active ? "bg-[#e9e8e6]" : "bg-[#c7c6c4]"}`}
      />
      <button
        className={`relative flex min-w-0 flex-1 items-center gap-[11px] text-left ${tab.active ? "text-[#3f3f3f]" : "text-[#6b6a69]"}`}
      >
        {tab.icon && (
          <span className="flex w-[31px] shrink-0 items-center justify-center">{tab.icon}</span>
        )}
        <span
          className={`block min-w-0 flex-1 overflow-hidden whitespace-nowrap ${tab.icon ? "[mask-image:linear-gradient(to_right,black_calc(100%_-_36px),transparent)]" : ""}`}
        >
          {tab.title}
        </span>
      </button>
      <button aria-label={`Close ${tab.title}`} className="relative ml-[16px] shrink-0">
        <svg viewBox="0 0 14 14" className="size-[14px]" aria-hidden="true">
          <path d="M1 1L13 13M13 1L1 13" stroke="#858483" strokeWidth="2" />
        </svg>
      </button>
    </div>
  );
}

function TabStrip() {
  return (
    <div className="relative flex h-[55px] justify-between bg-[#d6cdc6] pl-[22px] pr-[11px] font-['Noto_Sans','Open_Sans',sans-serif] text-[26px] leading-[53px]">
      <span className="absolute inset-x-0 bottom-0 h-px bg-[#bdb2a5]" />
      <div className="relative isolate flex min-w-0 flex-1 items-start pt-px">
        {TABS.map((tab, i) => (
          <TabItem key={i} tab={tab} order={tab.active ? TABS.length + 1 : TABS.length - i} />
        ))}
        <button aria-label="New tab" className="-ml-[4px] mt-[13px] h-[30px] w-[62px] shrink-0">
          <svg viewBox="0 0 62 30" className="size-full" aria-hidden="true">
            <path
              d="M3 1H48Q50 1 51 3L61 27Q62 29 59 29H15Q13 29 12 27L1 3Q0 1 3 1Z"
              fill="#c7c6c4"
              stroke="#c3b9ae"
              strokeWidth="1"
            />
          </svg>
        </button>
      </div>
      <button
        aria-label="Profile"
        className="relative mt-[4px] flex size-[45px] shrink-0 items-center justify-center rounded-[7px] border-2 border-[#c3b6a9]"
      >
        <svg viewBox="0 0 28 28" className="size-[28px]" fill="none" stroke="#5f5e5d" strokeWidth="1.200" aria-hidden="true">
          <circle cx="14" cy="14" r="13" fill="#f4f3f2" />
          <circle cx="14" cy="9" r="3.500" fill="#d6cdc6" />
          <path d="M7 18.500C9 15 19 15 21 18.500C19 23 9 23 7 18.500Z" fill="#d6cdc6" />
        </svg>
      </button>
    </div>
  );
}

function Toolbar() {
  return (
    <div className="flex h-[70px] items-center border-b border-[#c3c2c0] bg-[#e9e8e6] pl-[21px] pr-[29px] font-['Noto_Sans','Open_Sans',sans-serif]">
      <button aria-label="Back">
        <svg viewBox="0 0 27 26" className="h-[26px] w-[27px]" fill="none" stroke="#4a4a4a" strokeWidth="3.200" aria-hidden="true">
          <path d="M26 13H3M14 1.500L2.500 13L14 24.500" />
        </svg>
      </button>
      <button aria-label="Forward" className="ml-[26px]">
        <svg viewBox="0 0 27 26" className="h-[26px] w-[27px]" fill="none" stroke="#c9c8c6" strokeWidth="3.200" aria-hidden="true">
          <path d="M1 13H24M13 1.500L24.500 13L13 24.500" />
        </svg>
      </button>
      <button aria-label="Reload" className="ml-[26px]">
        <svg viewBox="0 0 27 26" className="h-[26px] w-[27px]" aria-hidden="true">
          <path
            d="M23.500 17A11 11 0 1 1 21.500 5.500"
            fill="none"
            stroke="#4a4a4a"
            strokeWidth="3.200"
          />
          <path d="M27 0V11H16Z" fill="#4a4a4a" />
        </svg>
      </button>
      <div className="ml-[21px] flex h-[53px] min-w-0 flex-1 items-center rounded-[5px] border border-[#a3a2a1] bg-[#f5f5f5] pl-[13px] pr-[12px]">
        <svg viewBox="0 0 26 26" className="size-[26px] shrink-0" aria-hidden="true">
          <circle cx="13" cy="13" r="11.500" fill="none" stroke="#777" strokeWidth="2.500" />
          <path d="M13 11.500V19M13 7V9.500" stroke="#777" strokeWidth="2.800" />
        </svg>
        <input
          aria-label="Address"
          readOnly
          value="localhost:8080/home"
          className="ml-[11px] min-w-0 flex-1 bg-[linear-gradient(to_right,#333333_110px,#919191_110px)] bg-clip-text pb-[2px] text-[26px] leading-[44px] text-transparent outline-none"
        />
        <button aria-label="Zoom" className="ml-[12px]">
          <svg viewBox="0 0 26 26" className="size-[26px]" fill="none" stroke="#777" aria-hidden="true">
            <circle cx="10.500" cy="10.500" r="9" strokeWidth="2.800" />
            <path d="M10.500 6V15M6 10.500H15" strokeWidth="2" />
            <path d="M17 17L24.500 24.500" strokeWidth="4" />
          </svg>
        </button>
        <button aria-label="Bookmark this page" className="ml-[20px]">
          <svg viewBox="0 0 28 27" className="h-[27px] w-[28px]" aria-hidden="true">
            <path
              d="M14 3.500L17 10.800H25L18.800 15.700L21 24L14 19.200L7 24L9.200 15.700L3 10.800H11Z"
              fill="none"
              stroke="#777"
              strokeWidth="2.800"
            />
          </svg>
        </button>
      </div>
      <button aria-label="Discover DevTools" className="ml-[20px]">
        <svg viewBox="0 0 28 23" className="h-[23px] w-[28px]" aria-hidden="true">
          <path d="M1 1H27V22H1Z" fill="#eeeeed" stroke="#cdcdcc" strokeWidth="1.500" />
          <path d="M1 11.500H27" stroke="#d0d0cf" strokeWidth="1" />
          <path d="M1 1.500H27" stroke="#c6c6c5" strokeWidth="2" />
          <text x="14" y="9.500" fontSize="5" textAnchor="middle" className="font-['Liberation_Sans',sans-serif]" fill="#c9c9c9">
            Discover
          </text>
          <text x="14" y="18.500" fontSize="5" textAnchor="middle" className="font-['Liberation_Sans',sans-serif] font-bold" fill="#b9b9b9">
            DevTools
          </text>
        </svg>
      </button>
      <button aria-label="Menu" className="ml-[42px]">
        <svg viewBox="0 0 8 26" className="h-[26px] w-[8px]" fill="#4a4a4a" aria-hidden="true">
          <circle cx="4" cy="3.500" r="3" />
          <circle cx="4" cy="13" r="3" />
          <circle cx="4" cy="22.500" r="3" />
        </svg>
      </button>
    </div>
  );
}

/* ------------------------------------------------------------------ */
/* Page                                                                 */
/* ------------------------------------------------------------------ */

function AccountForm({ title, id, focused }: { title: string; id: string; focused?: boolean }) {
  return (
    <section className="flex flex-col items-center">
      <h2 className="text-[76px] leading-[91px]">{title}</h2>
      <form className="mt-[20px] flex items-center text-[38px] leading-[46px]" onSubmit={(e) => e.preventDefault()}>
        <label htmlFor={`${id}-email`}>Email:</label>
        <span className="relative ml-[10px]">
          <input
            id={`${id}-email`}
            type="email"
            className={`block h-[72px] w-[417px] px-2 outline-none ${focused ? "rounded-[3px] border-[3px] border-[#ec8059]" : "border border-[#a9a9a9]"}`}
          />
          {focused && <span className="absolute left-[6px] top-[14px] h-[42px] w-[2px] bg-black" />}
        </span>
        <label htmlFor={`${id}-password`} className="ml-[10px]">
          Password:
        </label>
        <input
          id={`${id}-password`}
          type="password"
          className="ml-[10px] block h-[72px] w-[417px] border border-[#a9a9a9] px-2 outline-none"
        />
        <button type="submit" className="ml-[10px] rounded-[10px] bg-[#d3d3d3] px-[31px] py-[22px] text-black">
          Submit
        </button>
      </form>
    </section>
  );
}

export default function App() {
  return (
    <div className="flex min-h-screen flex-col bg-[#f5f5f5]">
      <TopPanel />
      <div className="flex flex-1">
        <Launcher />
        <div className="flex min-w-0 flex-1 flex-col">
          <TabStrip />
          <Toolbar />
          <main className="flex flex-1 flex-col items-center bg-[#f5f5f5] pl-[3px] pt-[118px] font-['Liberation_Sans',sans-serif] text-[#212529]">
            <h1 className="text-[95px] leading-[114px]">Welcome To ShortURL!</h1>
            <p className="mt-[19px] text-[57px] leading-[68px]">
              Short URLs are not just our business, they are our <em>passion</em>.
            </p>
            <div className="mt-[90px] flex flex-col gap-[119px]">
              <AccountForm title="Login" id="login" focused />
              <AccountForm title="Register" id="register" />
            </div>
          </main>
        </div>
      </div>
    </div>
  );
}
